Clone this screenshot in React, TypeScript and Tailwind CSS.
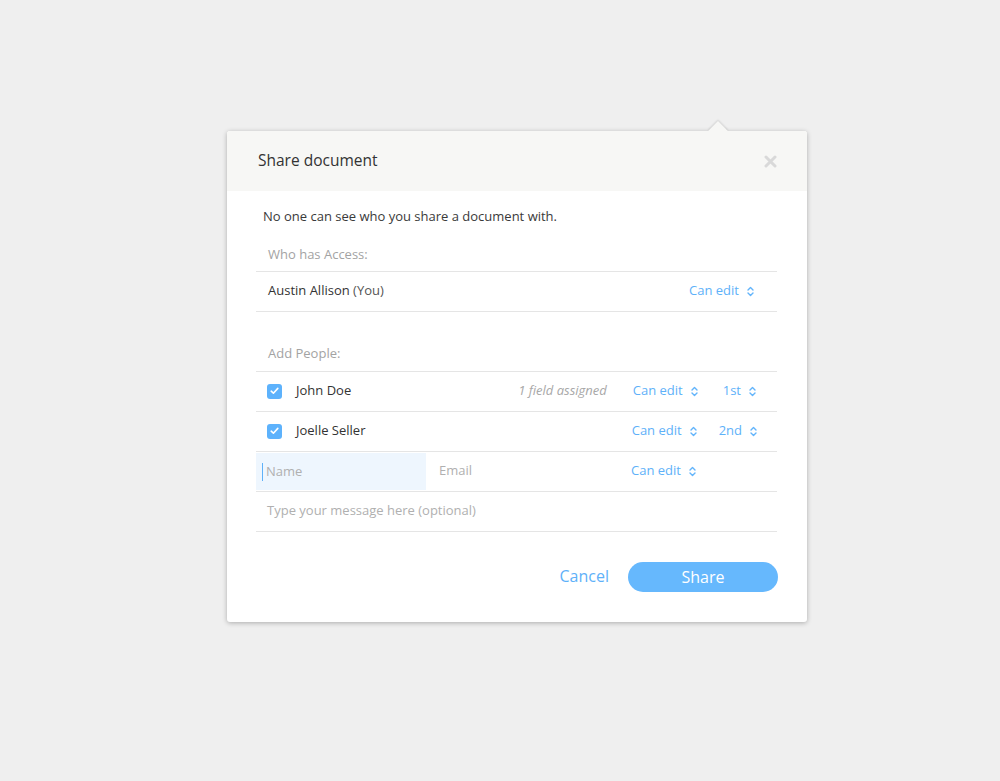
import React from 'react';

const font = { fontFamily: '"Open Sans", "Noto Sans", sans-serif' };

function UpDown() {
  return (
    <svg width="7" height="11" viewBox="0 0 7 11" fill="none" className="ml-[8px] inline-block">
      <path d="M1 4 L3.5 1.5 L6 4" stroke="#62b4fb" strokeWidth="1.4" strokeLinecap="round" strokeLinejoin="round" />
      <path d="M1 7 L3.5 9.5 L6 7" stroke="#62b4fb" strokeWidth="1.4" strokeLinecap="round" strokeLinejoin="round" />
    </svg>
  );
}

function Select({ label, className = '' }: { label: string; className?: string }) {
  return (
    <div className={`flex items-center text-[13px] text-[#5eb1f9] ${className}`}>
      <span>{label}</span>
      <UpDown />
    </div>
  );
}

function Check() {
  return (
    <div className="w-[15px] h-[15px] rounded-[3px] bg-[#5db2fc] flex items-center justify-center">
      <svg width="9" height="8" viewBox="0 0 9 8" fill="none">
        <path d="M1.2 4.2 L3.4 6.2 L7.8 1.4" stroke="white" strokeWidth="1.6" strokeLinecap="round" strokeLinejoin="round" />
      </svg>
    </div>
  );
}

export default function App() {
  return (
    <div className="w-full h-[781px] bg-[#efefef] pl-[227px] pt-[131px]" style={font}>
      <div className="relative w-[580px] h-[491px] bg-white rounded-[3px] shadow-[0_1px_5px_rgba(0,0,0,0.28)]">
        {/* pointer */}
        <div className="absolute -top-[7px] left-[484px] w-[14px] h-[14px] rotate-45 bg-[#f7f7f5] shadow-[-1px_-1px_2px_rgba(0,0,0,0.12)]" />
        <div className="relative h-[60px] bg-[#f7f7f5] rounded-t-[3px] flex items-center justify-between pl-[31px] pr-[30px]">
          <h2 className="text-[15.5px] text-[#333]">Share document</h2>
          <svg width="13" height="13" viewBox="0 0 13 13">
            <path d="M2 2 L11 11 M11 2 L2 11" stroke="#d9d9d9" strokeWidth="3" strokeLinecap="round" />
          </svg>
        </div>

        <div className="pl-[29px] pr-[30px]">
          <p className="pt-[16px] pl-[7px] text-[13px] text-[#3a3a3a]">No one can see who you share a document with.</p>

          <div className="mt-[18px] pl-[12px] h-[26px] text-[13px] text-[#a3a3a3]">Who has Access:</div>
          <div className="border-t border-[#e5e5e5]">
            <div className="h-[40px] border-b border-[#e5e5e5] flex items-center pl-[12px] pr-[23px]">
              <span className="text-[13px] text-[#333]">Austin Allison <span className="text-[#555]">(You)</span></span>
              <Select label="Can edit" className="ml-auto" />
            </div>
          </div>

          <div className="mt-[32px] pl-[12px] h-[27px] text-[13px] text-[#a3a3a3]">Add People:</div>
          <div className="border-t border-[#e5e5e5]">
            <div className="h-[40px] border-b border-[#e5e5e5] flex items-center pl-[11px] pr-[21px]">
              <Check />
              <span className="ml-[14px] text-[13px] text-[#333]">John Doe</span>
              <span className="ml-auto text-[13px] italic text-[#a8a8a8]">1 field assigned</span>
              <Select label="Can edit" className="ml-[26px]" />
              <Select label="1st" className="ml-[25px]" />
            </div>
            <div className="h-[40px] border-b border-[#e5e5e5] flex items-center pl-[11px] pr-[20px]">
              <Check />
              <span className="ml-[14px] text-[13px] text-[#333]">Joelle Seller</span>
              <Select label="Can edit" className="ml-auto" />
              <Select label="2nd" className="ml-[22px]" />
            </div>
            <div className="h-[40px] border-b border-[#e5e5e5] flex items-center">
              <div className="w-[170px] h-[37px] mt-[1px] bg-[#eef6fe] flex items-center pl-[6px]">
                <div className="w-px h-[18px] bg-[#5eb1f9]" />
                <span className="ml-[3px] text-[13px] text-[#b0b0b0]">Name</span>
              </div>
              <span className="ml-[13px] text-[13px] text-[#b0b0b0]">Email</span>
              <Select label="Can edit" className="ml-[159px]" />
            </div>
            <div className="h-[40px] border-b border-[#e5e5e5] flex items-center pl-[11px]">
              <span className="text-[13px] text-[#b0b0b0]">Type your message here (optional)</span>
            </div>
          </div>

          <div className="mt-[30px] flex items-center justify-end">
            <span className="text-[16px] text-[#5eb1f9] mr-[19px] -mt-[2px]">Cancel</span>
            <button className="w-[150px] h-[30px] rounded-full bg-[#66b8fd] text-white text-[16px] -mr-px">Share</button>
          </div>
        </div>
      </div>
    </div>
  );
}
